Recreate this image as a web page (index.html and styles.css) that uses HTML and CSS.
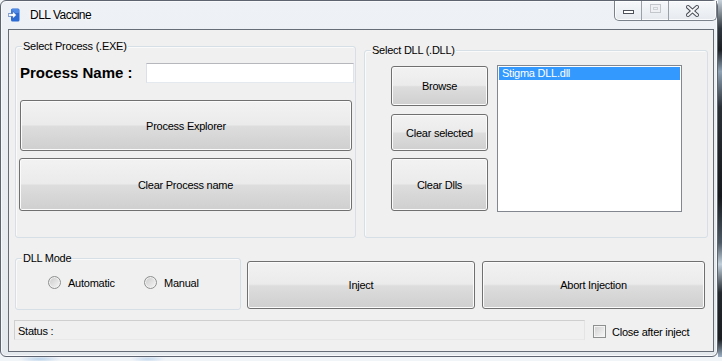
FILE: index.html
```html
<!DOCTYPE html>
<html>
<head>
<meta charset="utf-8">
<title>DLL Vaccine</title>
<link rel="stylesheet" href="styles.css">
</head>
<body>
<div class="screen">
  <div class="window">
    <div class="titlebar">
      <svg class="app-icon" width="12" height="14" viewBox="0 0 12 14">
        <rect x="3" y="0.5" width="8.5" height="13" rx="1.5" fill="#2b6bd3"/>
        <rect x="3.5" y="1" width="7.5" height="4" rx="1" fill="#4f8ae6"/>
        <path d="M0.3 5.6h4.4V3.2l3.9 3.8-3.9 3.8V8.4H0.3z" fill="#fff" stroke="#1b4ea6" stroke-width="0.6"/>
      </svg>
      <span class="title">DLL Vaccine</span>
      <div class="caption">
        <div class="cap cap-min"><span class="glyph-min"></span></div>
        <div class="cap cap-max"><span class="glyph-max"></span></div>
        <div class="cap cap-close">
          <svg width="13" height="12" viewBox="0 0 13 12">
            <path d="M2 2L11 10M11 2L2 10" stroke="#4b5058" stroke-width="4" stroke-linecap="square"/>
            <path d="M2 2L11 10M11 2L2 10" stroke="#f4f5f7" stroke-width="2" stroke-linecap="square"/>
          </svg>
        </div>
      </div>
    </div>
    <div class="client">
      <div class="row-top">
        <div class="group g-process">
          <span class="legend">Select Process (.EXE)</span>
          <div class="pn-row">
            <span class="pn-label">Process Name :</span>
            <div class="textbox"></div>
          </div>
          <div class="btn b-explorer">Process Explorer</div>
          <div class="btn b-clearproc">Clear Process name</div>
        </div>
        <div class="group g-dll">
          <span class="legend">Select DLL (.DLL)</span>
          <div class="dll-btns">
            <div class="btn b-browse">Browse</div>
            <div class="btn b-clearsel">Clear selected</div>
            <div class="btn b-cleardlls">Clear Dlls</div>
          </div>
          <div class="listbox">
            <div class="item">Stigma DLL.dll</div>
          </div>
        </div>
      </div>
      <div class="row-mid">
        <div class="group g-mode">
          <span class="legend">DLL Mode</span>
          <div class="radios">
            <div class="radio r-auto"><span class="rb"></span><span class="rlabel">Automatic</span></div>
            <div class="radio r-man"><span class="rb"></span><span class="rlabel">Manual</span></div>
          </div>
        </div>
        <div class="btn b-inject">Inject</div>
        <div class="btn b-abort">Abort Injection</div>
      </div>
      <div class="row-status">
        <div class="statusbox">Status :</div>
        <div class="check"><span class="cb"></span><span class="clabel">Close after inject</span></div>
      </div>
    </div>
  </div>
  <div class="desk"></div>
</div>
</body>
</html>
```
FILE: styles.css
```css
html, body {
  margin: 0;
  padding: 0;
}
body {
  background: #f2f5f8;
  font-family: "Liberation Sans", Arial, sans-serif;
  font-size: 11px;
  letter-spacing: -0.25px;
  color: #000;
}
.screen {
  display: flex;
  width: 722px;
  height: 361px;
  overflow: hidden;
  background:
    radial-gradient(ellipse 22px 3px at 40px 359px, #b9d2ea, transparent),
    radial-gradient(ellipse 18px 3px at 148px 359px, #c4d9ee, transparent),
    #f2f5f8;
}
.window {
  box-sizing: border-box;
  flex: none;
  width: 718px;
  height: 357px;
  border: 1px solid #5e6570;
  border-radius: 6px;
  background: linear-gradient(#eef1f5, #e4e9ee);
  box-shadow: inset 0 0 0 1px #f7f9fb;
}
.desk {
  flex: 1;
  height: 357px;
  background: linear-gradient(#c9d3dc 0%, #30363e 8%, #1b1f24 14%, #8fa2b4 20%, #2a2f36 30%, #15181c 55%, #4d5a66 68%, #c2d0dc 74%, #23282e 82%, #1a1d21 95%, #9fb3c6 100%);
}

/* Title bar */
.titlebar {
  display: flex;
  align-items: flex-start;
  height: 28px;
}
.app-icon {
  flex: none;
  margin: 7px 0 0 7px;
}
.title {
  margin: 6px 0 0 10px;
  font-size: 12px;
  line-height: 16px;
  letter-spacing: -0.5px;
  color: #000;
  text-shadow: 0 0 6px #fff, 0 0 3px #fff;
}
.caption {
  display: flex;
  margin-left: auto;
  height: 19px;
  border: 1px solid #7b818a;
  border-top: 0;
  border-radius: 0 0 5px 5px;
  overflow: hidden;
  background: linear-gradient(#f6f8fa, #e6eaef);
  box-shadow: inset 0 0 0 1px rgba(255,255,255,0.8);
}
.cap {
  display: flex;
  justify-content: center;
  height: 19px;
}
.cap-min { width: 26px; }
.cap-max { width: 26px; border-left: 1px solid #9aa0a8; }
.cap-close { width: 47px; border-left: 1px solid #9aa0a8; align-items: flex-start; }
.glyph-min {
  box-sizing: border-box;
  width: 11px;
  height: 4px;
  margin-top: 9px;
  border: 1px solid #4e535b;
  background: #fff;
}
.glyph-max {
  box-sizing: border-box;
  width: 11px;
  height: 9px;
  margin-top: 3px;
  border: 1px solid #c3c7cc;
  box-shadow: inset 0 0 0 2px #eef0f3, inset 0 0 0 3px #cfd3d8;
}
.cap-close svg {
  margin-top: 4px;
}

/* Client area */
.client {
  box-sizing: border-box;
  width: 706px;
  height: 323px;
  margin-left: 7px;
  border: 1px solid #666d77;
  background: #f0f0f0;
}

.group {
  position: relative;
  box-sizing: border-box;
  flex: none;
  border: 1px solid #d5dfe5;
  border-radius: 3px;
  box-shadow: inset 1px 1px 0 #fafafa;
}
.legend {
  position: absolute;
  top: -8px;
  left: 6px;
  padding: 0 1px;
  line-height: 14px;
  background: #f0f0f0;
  white-space: nowrap;
}

.btn {
  box-sizing: border-box;
  flex: none;
  display: flex;
  align-items: center;
  justify-content: center;
  border: 1px solid #707070;
  border-radius: 3px;
  background: linear-gradient(#f2f2f2 0%, #ebebeb 48%, #dddddd 52%, #cfcfcf 100%);
  box-shadow: inset 0 0 0 1px #fbfbfb;
  white-space: nowrap;
}

/* Row top */
.row-top {
  display: flex;
  align-items: flex-end;
  height: 192px;
  margin: 16px 0 0 6px;
}
.g-process {
  width: 341px;
  height: 192px;
  padding: 16px 0 0 4px;
}
.pn-row {
  display: flex;
  align-items: center;
  height: 20px;
}
.pn-label {
  width: 126px;
  padding-bottom: 2px;
  font-size: 15px;
  font-weight: bold;
  letter-spacing: 0;
  white-space: nowrap;
}
.textbox {
  box-sizing: border-box;
  width: 208px;
  height: 20px;
  background: #fff;
  border: 1px solid;
  border-color: #b5b7bd #e2e3ea #e3e9ef #dbdfe6;
}
.b-explorer {
  width: 332px;
  height: 51px;
  margin-top: 17px;
}
.b-clearproc {
  width: 333px;
  height: 53px;
  margin: 7px 0 0 -1px;
}

.g-dll {
  display: flex;
  width: 344px;
  height: 188px;
  margin-left: 8px;
  padding: 14px 0 0 26px;
}
.dll-btns {
  display: flex;
  flex-direction: column;
  width: 97px;
  margin-top: 1px;
}
.b-browse { width: 97px; height: 40px; }
.b-clearsel { width: 97px; height: 37px; margin-top: 8px; }
.b-cleardlls { width: 97px; height: 53px; margin-top: 7px; }
.listbox {
  box-sizing: border-box;
  width: 185px;
  height: 147px;
  margin-left: 9px;
  padding: 1px;
  border: 1px solid #828790;
  background: #fff;
}
.item {
  height: 13px;
  line-height: 13px;
  padding-left: 3px;
  background: #3399ff;
  color: #fff;
  white-space: nowrap;
}

/* Row mid */
.row-mid {
  display: flex;
  align-items: flex-start;
  margin: 20px 0 0 6px;
}
.g-mode {
  width: 226px;
  height: 52px;
  padding-top: 17px;
}
.radios {
  display: flex;
  align-items: center;
}
.radio {
  display: flex;
  align-items: center;
}
.r-auto {
  width: 96px;
  margin-left: 32px;
}
.rb {
  box-sizing: border-box;
  flex: none;
  width: 13px;
  height: 13px;
  border-radius: 50%;
  border: 1px solid #8e8f8f;
  background: linear-gradient(135deg, #c9c9c9, #f7f7f7);
  box-shadow: inset 0 0 0 1px #f2f2f2;
}
.rlabel {
  margin-left: 7px;
  white-space: nowrap;
}
.b-inject {
  width: 228px;
  height: 48px;
  margin: 3px 0 0 6px;
}
.b-abort {
  width: 223px;
  height: 48px;
  margin: 3px 0 0 7px;
}

/* Status row */
.row-status {
  display: flex;
  align-items: center;
  margin: 10px 0 0 5px;
}
.statusbox {
  box-sizing: border-box;
  display: flex;
  align-items: center;
  width: 571px;
  height: 20px;
  padding: 1px 0 0 3px;
  border: 1px solid;
  border-color: #cfcfcf #e4e4e4 #e8e8e8 #cfcfcf;
  white-space: nowrap;
}
.check {
  display: flex;
  align-items: center;
  margin: 3px 0 0 8px;
}
.cb {
  box-sizing: border-box;
  flex: none;
  width: 13px;
  height: 13px;
  border: 1px solid #8e8f8f;
  background: linear-gradient(135deg, #cfcfcf, #f9f9f9);
  box-shadow: inset 0 0 0 1px #f4f4f4;
}
.clabel {
  margin-left: 6px;
  white-space: nowrap;
}
```
